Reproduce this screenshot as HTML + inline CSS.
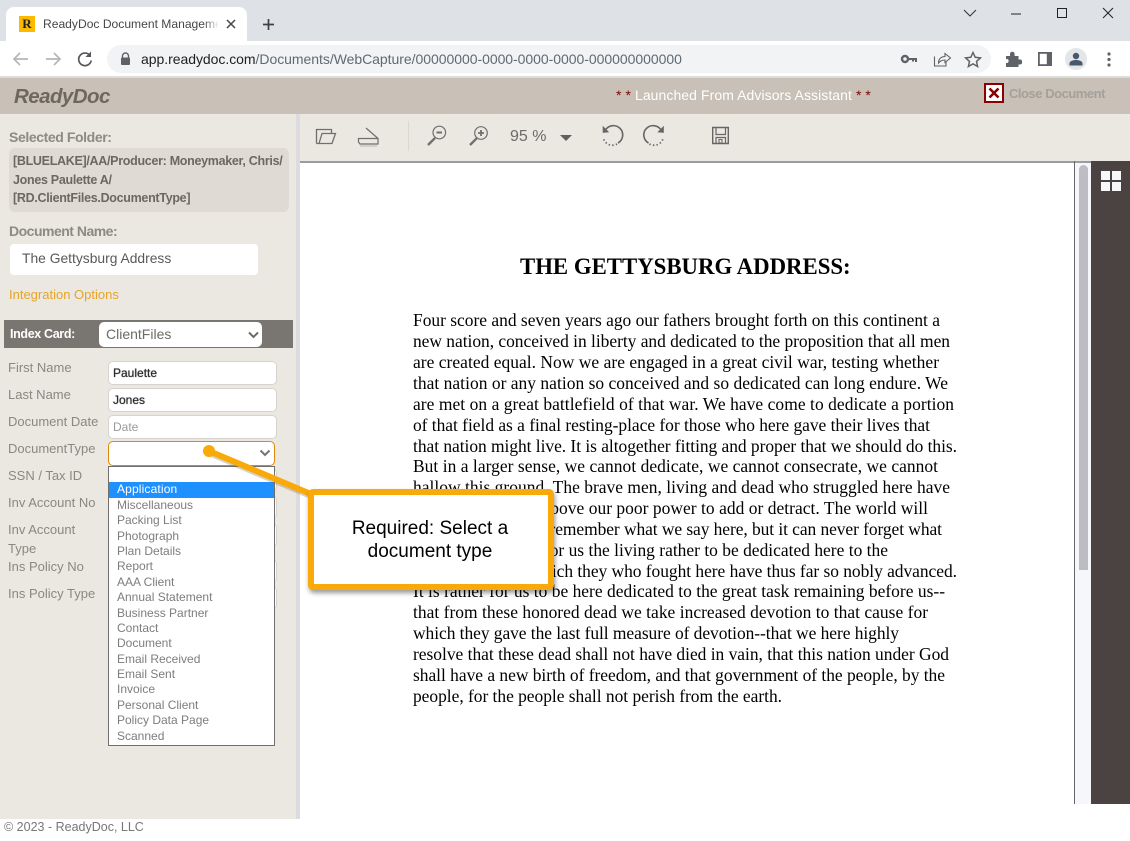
<!DOCTYPE html>
<html><head><meta charset="utf-8"><title>ReadyDoc</title>
<style>
html,body{margin:0;padding:0;background:#fff}
#p{position:relative;width:1130px;height:841px;overflow:hidden;background:#fff;font-family:"Liberation Sans",sans-serif}
#p div,#p svg{position:absolute}
.t{white-space:nowrap}
.lbl{left:8px;font-size:13px;color:#8b8781;white-space:nowrap;line-height:16px}
.fld{left:108px;width:167px;height:22px;background:#fff;border:1px solid #d6d3ce;border-radius:5px;font-size:12px;line-height:22px;color:#3d3d3d;text-indent:4px;box-sizing:content-box}
.it{left:117px;font-size:12px;color:#7d7d80;line-height:15px;white-space:nowrap}
#doc text{font:17.460px "Liberation Serif",serif;fill:#000}
</style></head><body><div id="p">
<!-- chrome -->
<div style="left:0;top:0;width:1130px;height:41px;background:#dee1e6"></div>
<div style="left:6px;top:7px;width:241px;height:34px;background:#fff;border-radius:8px 8px 0 0"></div>
<div style="left:19px;top:16px;width:16px;height:16px;background:#fdb900;font:bold 13px/16px 'Liberation Serif',serif;color:#222;text-align:center">R</div>
<div class="t" style="left:43px;top:16px;width:176px;overflow:hidden;font-size:12.1px;line-height:16px;color:#45474a">ReadyDoc Document Management</div>
<div style="left:204px;top:14px;width:15px;height:20px;background:linear-gradient(90deg,rgba(255,255,255,0),#fff)"></div>
<svg style="left:226px;top:19px" width="10" height="10"><path d="M1 1L9 9M9 1L1 9" stroke="#45474a" stroke-width="1.5"/></svg>
<svg style="left:262px;top:18px" width="13" height="13"><path d="M6.5 1V12M1 6.5H12" stroke="#3c4043" stroke-width="1.7"/></svg>
<svg style="left:960px;top:6px" width="160" height="16"><path d="M4 4L10 10L16 4" fill="none" stroke="#333" stroke-width="1"/><path d="M51 8H61" stroke="#222" stroke-width="1"/><rect x="97.5" y="2.5" width="9" height="9" fill="none" stroke="#222" stroke-width="1"/><path d="M143 2L153 12M153 2L143 12" stroke="#222" stroke-width="1"/></svg>
<div style="left:0;top:41px;width:1130px;height:36px;background:#fff"></div>
<div style="left:107px;top:45px;width:884px;height:28px;background:#f1f3f4;border-radius:14px"></div>
<svg style="left:12px;top:50px" width="90" height="18"><path d="M16 9H3M8 3L2 9L8 15" fill="none" stroke="#b4b6b9" stroke-width="1.7"/><path d="M34 9H47M42 3L48 9L42 15" fill="none" stroke="#b4b6b9" stroke-width="1.7"/><path d="M78 5.500A6.300 6.300 0 1 0 79.200 10.500" fill="none" stroke="#55585c" stroke-width="1.7"/><path d="M79 1.500V7H73.500Z" fill="#55585c"/></svg>
<svg style="left:120px;top:52px" width="11" height="14"><path d="M2.5 6V4a3 3 0 0 1 6 0V6" fill="none" stroke="#5f6368" stroke-width="1.4"/><rect x="1" y="5.5" width="9" height="7.5" rx="1" fill="#5f6368"/></svg>
<div class="t" style="left:141px;top:51px;font-size:14px;line-height:16px;color:#202124;letter-spacing:-.04px">app.readydoc.com<span style="color:#5f6a75">/Documents/WebCapture/00000000-0000-0000-0000-000000000000</span></div>
<svg style="left:900px;top:50px" width="85" height="18"><circle cx="5" cy="9" r="3" fill="none" stroke="#5f6368" stroke-width="2.4"/><path d="M8 9H16V12M13 9V11.5" fill="none" stroke="#5f6368" stroke-width="2"/><path d="M35 7H34.500V16H46V12" fill="none" stroke="#5f6368" stroke-width="1.100"/><path d="M38.500 13C38.500 8 42 6.500 45 6.500V3.500L50.500 8L45 12.500V10C42 10 40 11 38.500 13Z" fill="none" stroke="#5f6368" stroke-width="1.100"/><path d="M73 2.500L75.200 7.300L80.400 7.900L76.500 11.400L77.600 16.500L73 13.900L68.400 16.500L69.500 11.400L65.600 7.900L70.800 7.300Z" fill="none" stroke="#5f6368" stroke-width="1.500"/></svg>
<svg style="left:1004px;top:50px" width="18" height="18"><path d="M2 6H6V4A2.300 2.300 0 0 1 10.600 4V6H14.500V9.500H16A2.400 2.400 0 0 1 16 14.500H14.500V17H2V13H3.500A2.300 2.300 0 0 0 3.500 9H2Z" fill="#5f6368"/></svg>
<svg style="left:1038px;top:52px" width="14" height="14"><rect width="14" height="14" fill="#5f6368"/><rect x="1.800" y="1.800" width="7" height="10.400" fill="#fff"/></svg>
<div style="left:1065px;top:48px;width:22px;height:22px;border-radius:50%;background:#e3e5e8"></div>
<svg style="left:1069px;top:52px" width="14" height="14"><circle cx="7" cy="4" r="3.200" fill="#46586b"/><path d="M0.500 13.500V11.500C0.500 9 4 8 7 8S13.500 9 13.500 11.500V13.500Z" fill="#46586b"/></svg>
<svg style="left:1106px;top:52px" width="6" height="15"><circle cx="3" cy="2" r="1.600" fill="#5f6368"/><circle cx="3" cy="7.500" r="1.600" fill="#5f6368"/><circle cx="3" cy="13" r="1.600" fill="#5f6368"/></svg>
<div style="left:0;top:76px;width:1130px;height:2px;background:#dcdcdc"></div>
<!-- header -->
<div style="left:0;top:78px;width:1130px;height:36px;background:#c9c0b7"></div>
<div class="t" style="left:14px;top:85px;font:italic bold 20.500px/24px 'Liberation Sans',sans-serif;letter-spacing:-.55px;color:#6e675d">ReadyDoc</div>
<div class="t" style="left:616px;top:87px;font-size:14px;line-height:16px;color:#fff;letter-spacing:.07px"><span style="color:#8b0000">* *</span> Launched From Advisors Assistant <span style="color:#8b0000">* *</span></div>
<svg style="left:984px;top:83px" width="20" height="20"><rect x="1" y="1" width="18" height="18" fill="#fff" stroke="#8b0000" stroke-width="2"/><path d="M5.500 5.500L14.500 14.500M14.500 5.500L5.500 14.500" stroke="#8b0000" stroke-width="2.600"/></svg>
<div class="t" style="left:1009px;top:86px;font-size:13px;line-height:16px;font-weight:bold;color:#a5a09a;letter-spacing:-.47px">Close Document</div>
<!-- sidebar -->
<div style="left:0;top:114px;width:296px;height:705px;background:#ebe7e1"></div>
<div style="left:296px;top:114px;width:4px;height:705px;background:#dcdbdf"></div>
<div class="t" style="left:9px;top:129px;font-size:14px;line-height:16px;font-weight:bold;letter-spacing:-.4px;color:#8d8983">Selected Folder:</div>
<div style="left:9px;top:148px;width:280px;height:64px;border-radius:6px;background:#dfdad3"></div>
<div class="t" style="left:13px;top:152px;font-size:12.500px;line-height:18.600px;font-weight:bold;letter-spacing:-.3px;color:#6b6862">[BLUELAKE]/AA/Producer: Moneymaker, Chris/<br>Jones Paulette A/<br>[RD.ClientFiles.DocumentType]</div>
<div class="t" style="left:9px;top:223px;font-size:14px;line-height:16px;font-weight:bold;letter-spacing:-.5px;color:#8d8983">Document Name:</div>
<div style="left:10px;top:244px;width:248px;height:31px;background:#fff;border-radius:4px"></div>
<div class="t" style="left:22px;top:250px;font-size:13.850px;line-height:16px;color:#58595c">The Gettysburg Address</div>
<div class="t" style="left:9px;top:287px;font-size:13px;line-height:16px;color:#e5a52a">Integration Options</div>
<div style="left:4px;top:320px;width:289px;height:28px;background:#797570"></div>
<div class="t" style="left:10px;top:326px;font-size:12.500px;line-height:16px;font-weight:bold;letter-spacing:-.35px;color:#fff">Index Card:</div>
<div style="left:99px;top:322px;width:163px;height:25px;background:#fff;border-radius:5px"></div>
<div class="t" style="left:106px;top:326px;font-size:14px;line-height:16px;color:#6d6b68">ClientFiles</div>
<svg style="left:248px;top:331px" width="11" height="8"><path d="M1 1.500L5.500 6L10 1.500" fill="none" stroke="#6d6b68" stroke-width="2"/></svg>
<div class="lbl" style="top:360px">First Name</div>
<div class="lbl" style="top:387px">Last Name</div>
<div class="lbl" style="top:414px">Document Date</div>
<div class="lbl" style="top:441px">DocumentType</div>
<div class="lbl" style="top:468px">SSN / Tax ID</div>
<div class="lbl" style="top:495px">Inv Account No</div>
<div class="lbl" style="top:522px">Inv Account</div>
<div class="lbl" style="top:541px">Type</div>
<div class="lbl" style="top:559px">Ins Policy No</div>
<div class="lbl" style="top:586px">Ins Policy Type</div>
<div class="fld" style="top:361px;color:#2b2b2b;text-shadow:0 0 .8px #333">Paulette</div>
<div class="fld" style="top:388px;color:#2b2b2b;text-shadow:0 0 .8px #333">Jones</div>
<div class="fld" style="top:415px;color:#9a9a9a">Date</div>
<div class="fld" style="top:468px"></div><div class="fld" style="top:495px"></div><div class="fld" style="top:523px"></div><div class="fld" style="top:559px"></div><div class="fld" style="top:586px"></div>
<div style="left:108px;top:441px;width:165px;height:23px;background:#fff;border:1px solid #dc8a0c;border-radius:5px"></div>
<svg style="left:259px;top:449px" width="12" height="8"><path d="M1.500 1.500L6 6L10.500 1.500" fill="none" stroke="#77746f" stroke-width="2"/></svg>
<!-- dropdown -->
<div style="left:108px;top:466px;width:165px;height:278px;background:#fff;border:1px solid #6f6f6f"></div>
<div style="left:109px;top:482px;width:165px;height:16px;background:#1e90ff"></div>
<div class="it" style="top:482px;color:#fff;letter-spacing:.15px">Application</div>
<div class="it" style="top:498px">Miscellaneous</div>
<div class="it" style="top:513px">Packing List</div>
<div class="it" style="top:529px">Photograph</div>
<div class="it" style="top:544px">Plan Details</div>
<div class="it" style="top:559px">Report</div>
<div class="it" style="top:575px">AAA Client</div>
<div class="it" style="top:590px">Annual Statement</div>
<div class="it" style="top:606px">Business Partner</div>
<div class="it" style="top:621px">Contact</div>
<div class="it" style="top:636px">Document</div>
<div class="it" style="top:652px">Email Received</div>
<div class="it" style="top:667px">Email Sent</div>
<div class="it" style="top:682px">Invoice</div>
<div class="it" style="top:698px">Personal Client</div>
<div class="it" style="top:713px">Policy Data Page</div>
<div class="it" style="top:729px">Scanned</div>
<div class="t" style="left:4px;top:820px;font-size:12.500px;line-height:15px;color:#777">© 2023 - ReadyDoc, LLC</div>
<!-- viewer toolbar -->
<div style="left:300px;top:114px;width:830px;height:47px;background:#ebe7e1"></div>
<div style="left:300px;top:161px;width:791px;height:2px;background:#9c9ca0"></div>
<div style="left:408px;top:121px;width:1px;height:30px;background:#dbd7d1"></div>
<svg style="left:300px;top:115px" width="200" height="45" fill="none" stroke="#6f6f6d"><path d="M16.500 28.500V14.500H31.500V18M19 28.500L22 18.500H35.500L32 28.500H16.500Z" stroke-width="1.300"/><path d="M66 13L78 23.500M58.500 23.500H78V29H60L58.500 27Z" stroke-width="1.200"/><path d="M60 31H77" stroke="#b9b6b0" stroke-width="1"/><circle cx="139.300" cy="17.500" r="6.300" stroke-width="1.200"/><path d="M136.500 17.500H142" stroke-width="2"/><path d="M135 23L128 30" stroke-width="2.300"/><circle cx="181" cy="18" r="6.300" stroke-width="1.200"/><path d="M178 18H184M181 15V21" stroke-width="1.800"/><path d="M176.700 23.300L170 30" stroke-width="2.300"/></svg>
<div class="t" style="left:510px;top:128px;font-size:16px;line-height:18px;color:#6a6a68">95 %</div>
<svg style="left:560px;top:135px" width="12" height="6"><path d="M0 0H12L6 6Z" fill="#5f5f5d"/></svg>
<svg style="left:590px;top:115px" width="150" height="45" fill="none" stroke="#666664"><path d="M15.500 15A9.300 9.300 0 1 1 28 28" stroke-width="1.600"/><path d="M27 29A9.300 9.300 0 0 1 13.300 23" stroke-width="1.700" stroke-dasharray="1.400 2.200"/><path d="M13 11.500V17.500L18.500 17Z" fill="#666664" stroke="#666664" stroke-width=".6"/><path d="M71 15A9.300 9.300 0 1 0 58.500 28" stroke-width="1.600"/><path d="M59.500 29A9.300 9.300 0 0 0 73.200 23" stroke-width="1.700" stroke-dasharray="1.400 2.200"/><path d="M73.500 11.500V17.500L68 17Z" fill="#666664" stroke="#666664" stroke-width=".6"/><path d="M122.700 12.500H138.300V28.500H122.700Z" stroke-width="1.400"/><path d="M126 12.500V19.500H135.500V12.500M126 28.500V22.500H135.500V28.500" stroke-width="1.200"/><path d="M129 24.500H132V28H129Z" stroke-width="1"/></svg>
<!-- document -->
<div style="left:300px;top:163px;width:774px;height:641px;background:#fff"></div>
<div style="left:1075px;top:163px;width:16px;height:641px;background:#f5f7fa"></div>
<div style="left:1074px;top:161px;width:1px;height:643px;background:#66666a"></div>
<div style="left:1079px;top:165px;width:9px;height:405px;background:#bcbcc2;border-radius:4.500px 4.500px 0 0"></div>
<div style="left:1091px;top:161px;width:39px;height:643px;background:#4a4342"></div>
<svg style="left:1101px;top:171px" width="20" height="20"><path d="M0 0H9V9H0ZM11 0H20V9H11ZM0 11H9V20H0ZM11 11H20V20H11Z" fill="#f8f8fa"/></svg>
<div class="t" style="left:520px;top:254px;font:bold 22.800px/26px 'Liberation Serif',serif;color:#000">THE GETTYSBURG ADDRESS:</div>
<svg id="doc" style="left:0;top:0" width="1000" height="720">
<text x="413" y="326" textLength="527">Four score and seven years ago our fathers brought forth on this continent a</text>
<text x="413" y="347" textLength="537">new nation, conceived in liberty and dedicated to the proposition that all men</text>
<text x="413" y="368" textLength="526">are created equal. Now we are engaged in a great civil war, testing whether</text>
<text x="413" y="389" textLength="535">that nation or any nation so conceived and so dedicated can long endure. We</text>
<text x="413" y="410" textLength="541">are met on a great battlefield of that war. We have come to dedicate a portion</text>
<text x="413" y="431" textLength="517">of that field as a final resting-place for those who here gave their lives that</text>
<text x="413" y="452" textLength="544">that nation might live. It is altogether fitting and proper that we should do this.</text>
<text x="413" y="472" textLength="525">But in a larger sense, we cannot dedicate, we cannot consecrate, we cannot</text>
<text x="413" y="493" textLength="537">hallow this ground. The brave men, living and dead who struggled here have</text>
<text x="413" y="514" textLength="515">consecrated it, far above our poor power to add or detract. The world will</text>
<text x="413" y="535" textLength="529">little note, nor long remember what we say here, but it can never forget what</text>
<text x="413" y="556" textLength="475">they did here. It is for us the living rather to be dedicated here to the</text>
<text x="413" y="577" textLength="544">unfinished work which they who fought here have thus far so nobly advanced.</text>
<text x="413" y="597" textLength="532">It is rather for us to be here dedicated to the great task remaining before us--</text>
<text x="413" y="618" textLength="515">that from these honored dead we take increased devotion to that cause for</text>
<text x="413" y="639" textLength="486">which they gave the last full measure of devotion--that we here highly</text>
<text x="413" y="660" textLength="536">resolve that these dead shall not have died in vain, that this nation under God</text>
<text x="413" y="681" textLength="532">shall have a new birth of freedom, and that government of the people, by the</text>
<text x="413" y="702" textLength="369">people, for the people shall not perish from the earth.</text>
</svg>
<!-- callout -->
<svg style="left:200px;top:440px" width="130" height="70"><path d="M9 11L125 60" stroke="#7a6a50" stroke-opacity=".3" stroke-width="6" transform="translate(0 2)"/><path d="M9 11L125 60" stroke="#f9a908" stroke-width="6"/><circle cx="9" cy="11" r="6" fill="#f9a908"/></svg>
<div style="left:308px;top:489px;width:246px;height:101px;box-sizing:border-box;background:#fff;border:6px solid #f9a908;border-radius:5px;box-shadow:1px 3px 5px rgba(0,0,0,.4)"></div>
<div style="left:314px;top:518px;width:232px;text-align:center;font-size:19px;line-height:22.500px;color:#000">Required: Select a<br>document type</div>
</div></body></html>
